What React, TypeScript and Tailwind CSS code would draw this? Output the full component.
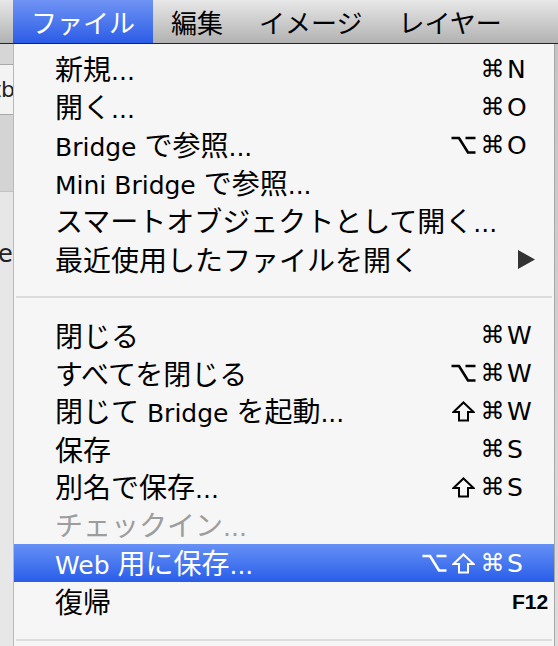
import React from 'react';

type Item = { label: string; mods?: string[]; keyName?: string; disabled?: boolean; active?: boolean; submenu?: boolean };

const sectionA: Item[] = [
  { label: '新規...', mods: ['⌘'], keyName: 'N' },
  { label: '開く...', mods: ['⌘'], keyName: 'O' },
  { label: 'Bridge で参照...', mods: ['⌥', '⌘'], keyName: 'O' },
  { label: 'Mini Bridge で参照...' },
  { label: 'スマートオブジェクトとして開く...' },
  { label: '最近使用したファイルを開く', submenu: true },
];

const sectionB: Item[] = [
  { label: '閉じる', mods: ['⌘'], keyName: 'W' },
  { label: 'すべてを閉じる', mods: ['⌥', '⌘'], keyName: 'W' },
  { label: '閉じて Bridge を起動...', mods: ['⇧', '⌘'], keyName: 'W' },
  { label: '保存', mods: ['⌘'], keyName: 'S' },
  { label: '別名で保存...', mods: ['⇧', '⌘'], keyName: 'S' },
  { label: 'チェックイン...', disabled: true },
  { label: 'Web 用に保存...', mods: ['⌥', '⇧', '⌘'], keyName: 'S', active: true },
  { label: '復帰', keyName: 'F12' },
];

const latin = "font-['DejaVu_Sans',sans-serif] text-[25px]";
const cjk = "font-['Noto_Sans_CJK_JP',sans-serif] text-[28px]";

// split label into latin / japanese runs so each gets its own size
const Label = ({ text }: { text: string }) => (
  <span className="whitespace-nowrap">
    {text.split(/([\u3000-\u9fff\uff00-\uffef]+)/).filter(Boolean).map((part, i) =>
      /[\u3000-\u9fff\uff00-\uffef]/.test(part)
        ? <span key={i} className={cjk}>{part}</span>
        : <span key={i} className={latin}>{part}</span>
    )}
  </span>
);

// shift key glyph, outlined arrow like the mac one
const ShiftIcon = () => (
  <svg width="23" height="21" viewBox="0 0 23 21" className="inline-block">
    <path d="M11.5 1.5 L21.5 11 H16 V19.5 H7 V11 H1.5 Z" fill="none" stroke="currentColor" strokeWidth="2" strokeLinejoin="miter" />
  </svg>
);

// option key glyph
const OptionIcon = () => (
  <svg width="25" height="20" viewBox="0 0 25 20" className="inline-block">
    <path d="M0.5 3 H8 L17 17.5 H24.5 M14.5 3 H24.5" fill="none" stroke="currentColor" strokeWidth="2.6" />
  </svg>
);

const Row = ({ item }: { item: Item }) => {
  const color = item.active ? 'text-white' : item.disabled ? 'text-[#9d9d9d]' : 'text-black';
  return (
    <div className={`h-[38px] flex items-center pl-[41px] leading-none ${color} ${item.active ? 'bg-gradient-to-b from-[#6690f5] to-[#295ce9]' : ''}`}>
      <div className="flex-1"><Label text={item.label} /></div>
      <div className="flex justify-end items-center font-['DejaVu_Sans',sans-serif] text-[24px]">
        {(item.mods || []).map((m, i) => (
          <span key={i} className="w-[29px] flex justify-center">
            {m === '⇧' ? <ShiftIcon /> : m === '⌥' ? <OptionIcon /> : m}
          </span>
        ))}
      </div>
      <div className="w-[47px] flex items-center">
        {item.keyName === 'F12' ? (
          <span className="pl-[5px] font-['Liberation_Sans',sans-serif] font-bold text-[21px]">F12</span>
        ) : item.keyName ? (
          <span className="font-['DejaVu_Sans',sans-serif] text-[25px]">{item.keyName}</span>
        ) : item.submenu ? (
          <svg width="17" height="19" viewBox="0 0 17 19" className="ml-[11px]">
            <polygon points="0,0 17,9.5 0,19" fill="#333" />
          </svg>
        ) : null}
      </div>
    </div>
  );
};

const Separator = ({ className }: { className: string }) => (
  <div className={className}><div className="h-[2px] mx-[2px] bg-[#dcdcdc]" /></div>
);

const MenuTitle = ({ label, active }: { label: string; active?: boolean }) => (
  <div className={`h-full flex items-center px-[18px] font-['Noto_Sans_CJK_JP',sans-serif] text-[26px] leading-none ${active ? 'text-white bg-gradient-to-b from-[#7093f4] to-[#2b5be6]' : 'text-black'}`}>
    {label}
  </div>
);

const App = () => {
  return (
    <div className="w-[558px] h-[646px] overflow-hidden bg-[#e4e4e4]">
      {/* menu bar */}
      <div className="h-[44px] flex pl-[13px] border-b border-[#262626] bg-gradient-to-b from-[#e8e8e8] to-[#b2b2b2]">
        <MenuTitle label="ファイル" active />
        <MenuTitle label="編集" />
        <MenuTitle label="イメージ" />
        <MenuTitle label="レイヤー" />
      </div>

      <div className="flex h-[602px]">
        {/* window behind, left edge */}
        <div className="w-[14px] flex flex-col border-r border-[#b9b9b9] overflow-hidden">
          <div className="h-[21px] bg-[#d6d6d6] border-b border-[#a9a9a9]" />
          <div className="h-[50px] bg-[#f3f3f3] border-b border-[#a9a9a9] flex items-center justify-end">
            <span className="font-['DejaVu_Sans',sans-serif] text-[22px] text-[#222] -mr-[2px]">tb</span>
          </div>
          <div className="h-[77px] bg-[#d4d4d4] border-b border-[#c2c2c2]" />
          <div className="flex-1 bg-[#e7e7e7] pt-[50px]">
            <span className="block font-['DejaVu_Sans',sans-serif] text-[24px] text-[#222] -ml-[2px] leading-none">e</span>
          </div>
        </div>

        {/* dropdown */}
        <div className="w-[540px] bg-[#f6f6f6] pt-[6px]">
          {sectionA.map((it, i) => <Row key={i} item={it} />)}
          <Separator className="py-[18px]" />
          {sectionB.map((it, i) => <Row key={i} item={it} />)}
          <Separator className="pt-[19px]" />
        </div>

        <div className="flex-1 border-l border-[#a8a8a8] bg-gradient-to-b from-[#c4c4c4] to-[#dedede]" />
      </div>
    </div>
  );
};

export default App;
